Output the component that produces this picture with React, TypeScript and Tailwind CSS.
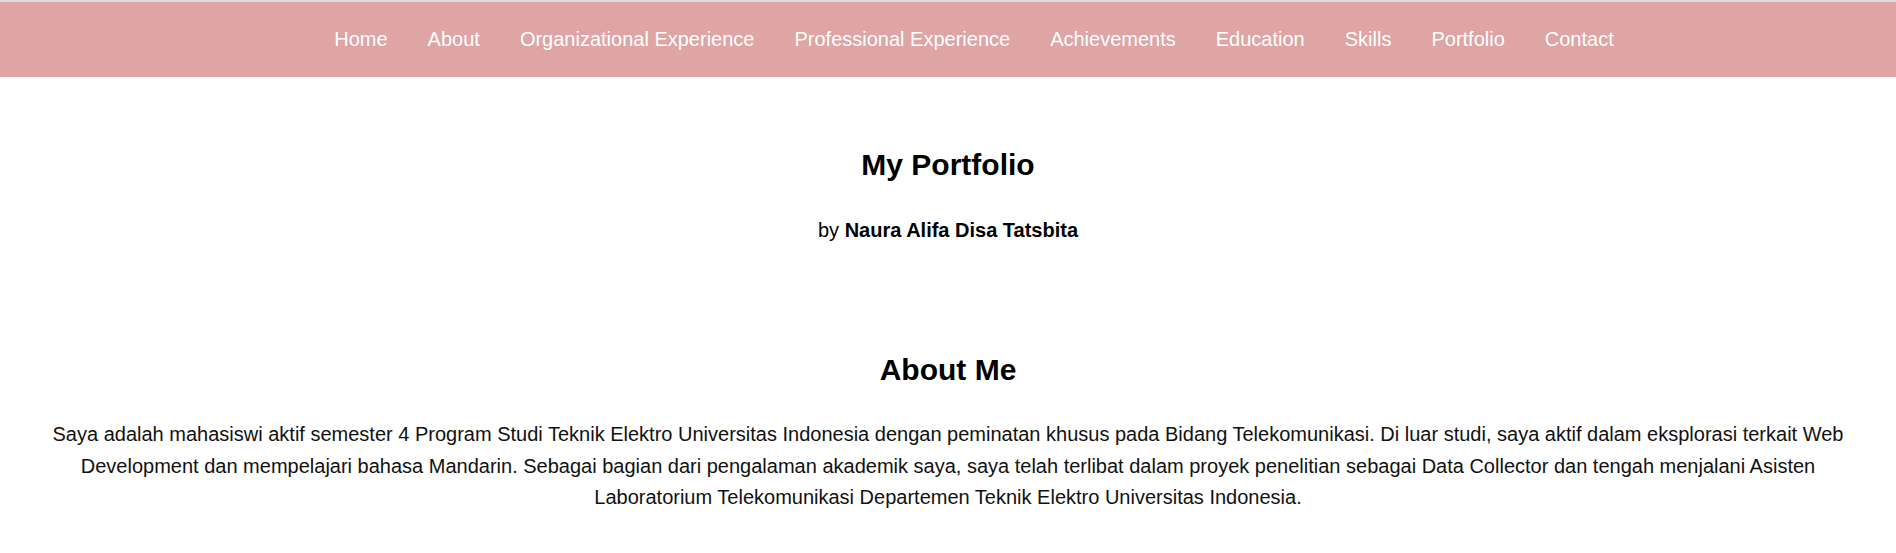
import React from 'react';

const navItems = [
  'Home',
  'About',
  'Organizational Experience',
  'Professional Experience',
  'Achievements',
  'Education',
  'Skills',
  'Portfolio',
  'Contact',
];

const App = () => {
  return (
    <div className="min-h-screen bg-white text-black" style={{ fontFamily: '"Liberation Sans", Arial, sans-serif' }}>
      <nav className="border-t-2 border-[#dcdcdc] bg-[#dea5a4]">
        <ul className="flex h-[75px] items-center justify-center gap-[40px] pl-[52px]">
          {navItems.map((item) => (
            <li key={item}>
              <a href="#" className="text-[20px] leading-[24px] text-white">
                {item}
              </a>
            </li>
          ))}
        </ul>
      </nav>

      <header className="pt-[70px] text-center">
        <h1 className="text-[30px] font-bold leading-[36px]">My Portfolio</h1>
        <p className="mt-[35px] text-[20px] leading-[24px]">
          by <span className="font-bold">Naura Alifa Disa Tatsbita</span>
        </p>
      </header>

      <section className="mt-[110px] px-[48px] text-center">
        <h2 className="text-[30px] font-bold leading-[36px]">About Me</h2>
        <p className="mt-[31px] text-[20px] leading-[31.6px] text-[#111]">
          Saya adalah mahasiswi aktif semester 4 Program Studi Teknik Elektro Universitas Indonesia dengan peminatan
          khusus pada Bidang Telekomunikasi. Di luar studi, saya aktif dalam eksplorasi terkait Web Development dan
          mempelajari bahasa Mandarin. Sebagai bagian dari pengalaman akademik saya, saya telah terlibat dalam proyek
          penelitian sebagai Data Collector dan tengah menjalani Asisten Laboratorium Telekomunikasi Departemen Teknik
          Elektro Universitas Indonesia.
        </p>
      </section>
    </div>
  );
};

export default App;
